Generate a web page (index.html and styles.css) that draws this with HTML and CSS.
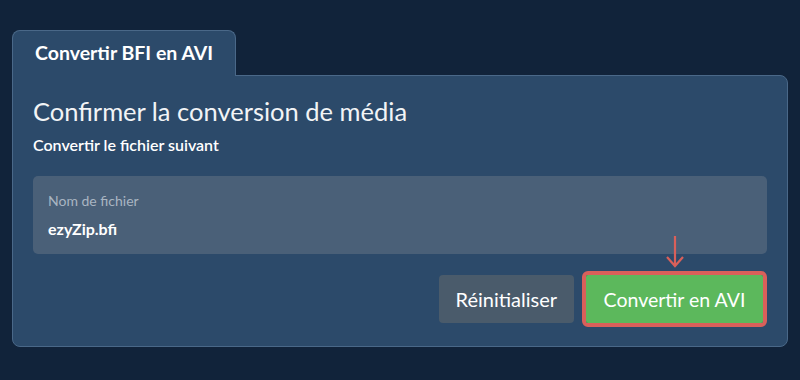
FILE: index.html
```html
<!DOCTYPE html>
<html>

<head>
  <title>Convertir BFI en AVI</title>
  <link rel="stylesheet" href="styles.css">
</head>

<body>
  <main class="wrap">
    <div class="tab">Convertir BFI en AVI</div>

    <section class="panel">
      <h1 class="title">Confirmer la conversion de média</h1>
      <p class="subtitle">Convertir le fichier suivant</p>

      <div class="file-box">
        <div class="file-label">Nom de fichier</div>
        <div class="file-name">ezyZip.bfi</div>
      </div>

      <div class="actions">
        <button class="secondary-btn">Réinitialiser</button>
        <span class="highlight">
          <svg class="arrow" width="20" height="34" viewBox="0 0 20 34">
            <path d="M10 1 V31 M2 22 L10 31 L18 22" fill="none" stroke="#d9605a" stroke-width="2.2" />
          </svg>
          <button class="primary-btn">Convertir en AVI</button>
        </span>
      </div>
    </section>
  </main>
</body>

</html>
```

FILE: styles.css
```css
html,
body {
  margin: 0;
  padding: 0;
}

body {
  background-color: #11233a;
  font-family: Lato, "Open Sans", sans-serif;
  color: #fff;
}

.wrap {
  padding: 30px 12px 0 12px;
}

.tab {
  display: inline-block;
  position: relative;
  z-index: 2;
  margin-bottom: -1px;
  padding: 13px 22px 14px 22px;
  font-size: 19.5px;
  font-weight: 700;
  line-height: 18px;
  background-color: #2c4a6a;
  border: 1px solid #4a6888;
  border-bottom: none;
  border-radius: 8px 8px 0 0;
}

.panel {
  background-color: #2c4a6a;
  border: 1px solid #4a6888;
  border-radius: 0 8px 8px 8px;
  padding: 20px 20px 19px 20px;
}

.title {
  margin: 0;
  font-size: 25.5px;
  font-weight: 400;
  line-height: 30px;
  color: #f2f4f6;
}

.subtitle {
  margin: 9px 0 0 0;
  font-size: 16px;
  font-weight: 600;
  line-height: 20px;
}

.file-box {
  margin-top: 21px;
  background-color: #4a6078;
  border-radius: 5px;
  padding: 17px 15px 16px 15px;
}

.file-label {
  font-size: 14px;
  line-height: 16px;
  color: #a9b5c2;
}

.file-name {
  margin-top: 11px;
  font-size: 16px;
  font-weight: 700;
  line-height: 18px;
}

.actions {
  display: flex;
  justify-content: flex-end;
  align-items: center;
  gap: 8px;
  margin-top: 17px;
}

button {
  height: 48px;
  border: none;
  border-radius: 4px;
  font-family: Lato, "Open Sans", sans-serif;
  font-size: 20px;
  color: #fff;
  padding: 0 17px;
  cursor: pointer;
}

.secondary-btn {
  background-color: #4a5b6b;
}

.primary-btn {
  background-color: #5cb85c;
  width: 177px;
  font-size: 19.5px;
  padding: 0;
}

.highlight {
  position: relative;
  display: flex;
  border: 4px solid #d9605a;
  border-radius: 6px;
}

.highlight .primary-btn {
  border-radius: 2px;
}

.arrow {
  position: absolute;
  left: 79px;
  top: -40px;
}
```
